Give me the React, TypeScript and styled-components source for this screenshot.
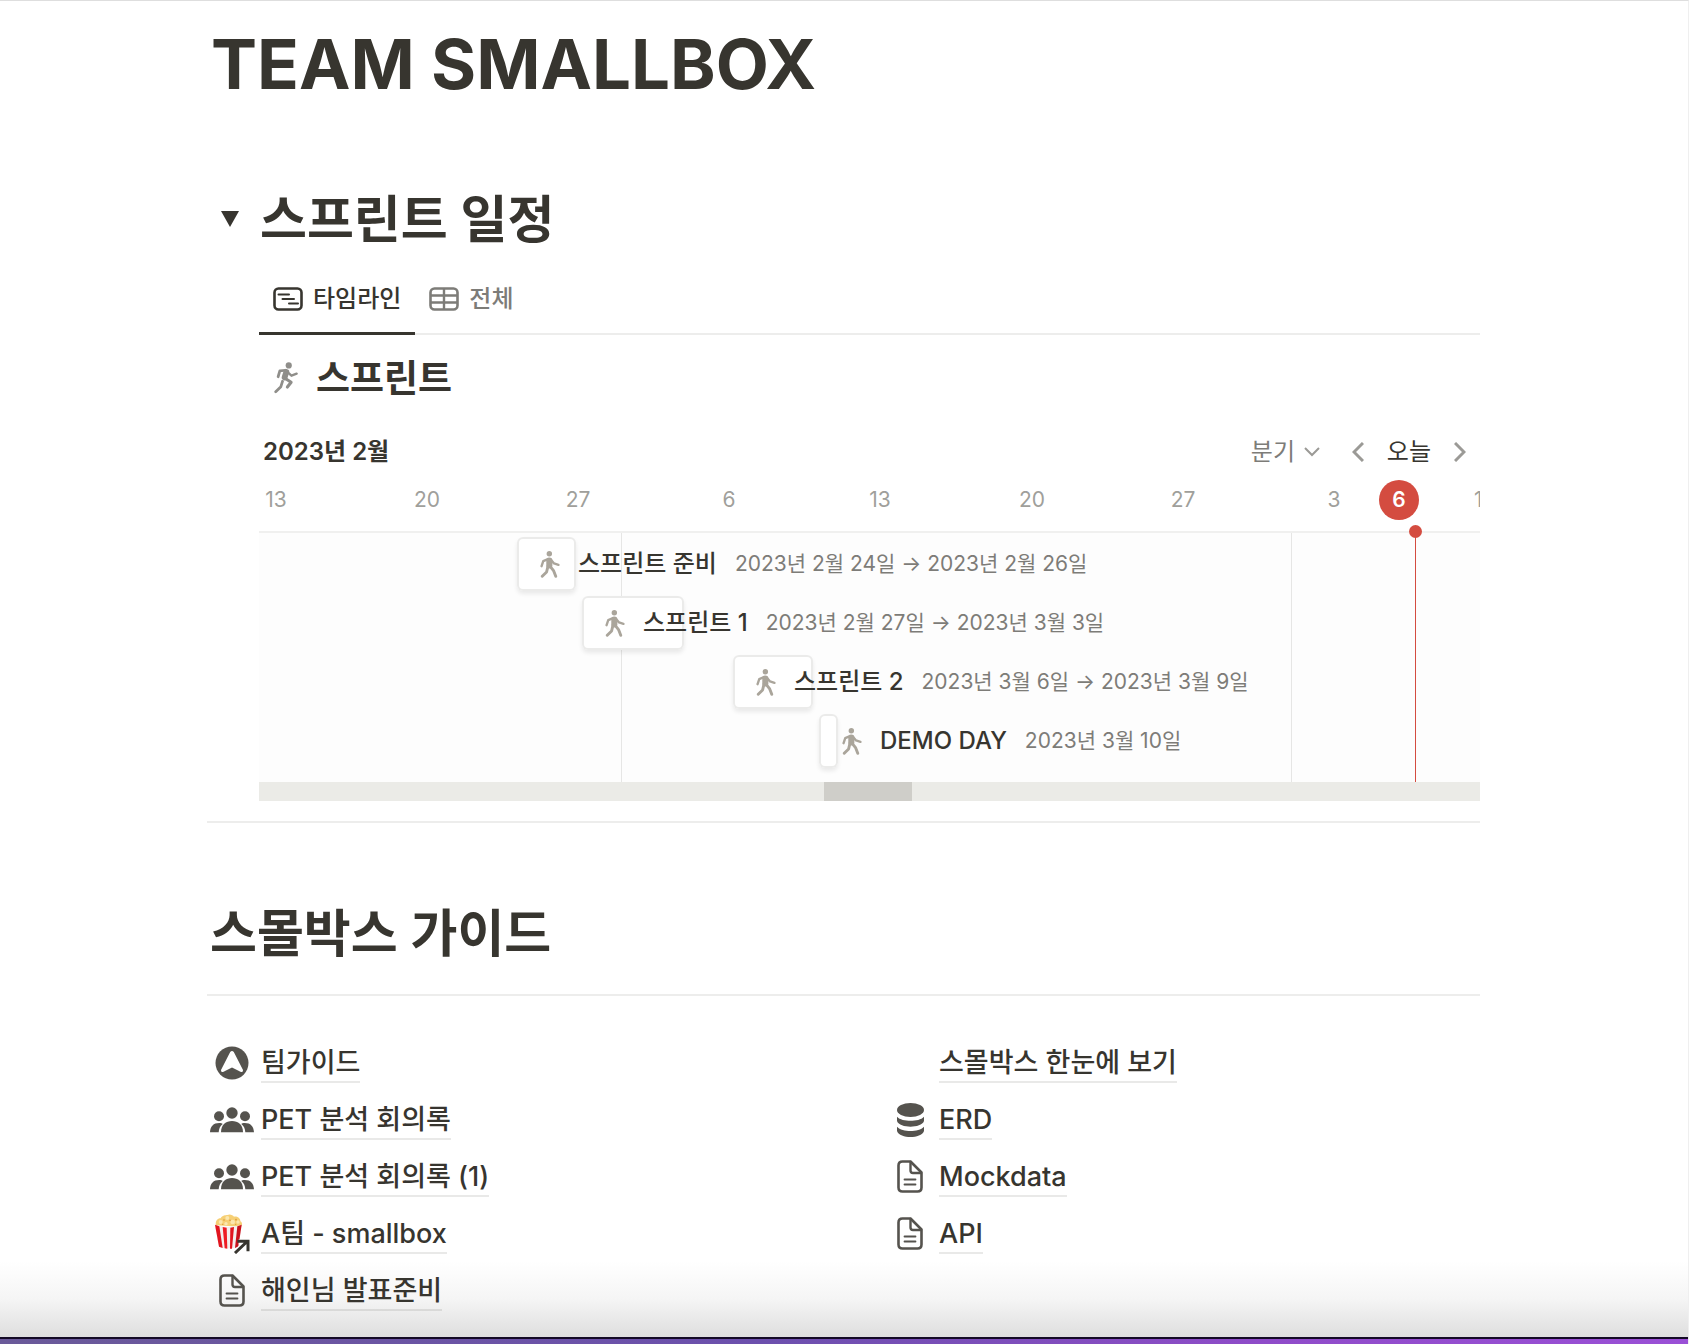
import React from "react";
import styled, { createGlobalStyle, css } from "styled-components";

const INK = "#37352f";
const GRAY = "#7d7c78";
const LINE = "#ededec";

const GlobalStyle = createGlobalStyle`
  *, *::before, *::after { box-sizing: border-box; }
  body {
    margin: 0;
    background: #fff;
    color: ${INK};
    font-family: Inter, "Noto Sans CJK KR", sans-serif;
    -webkit-font-smoothing: antialiased;
  }
  h1, h2, h3, p, ul { margin: 0; padding: 0; }
  button, select { font: inherit; color: inherit; background: none; border: 0; padding: 0; margin: 0; }
`;

const Page = styled.div`
  min-height: 100vh;
  display: flex;
  flex-direction: column;
  border-top: 1px solid #dedede;
  border-right: 1px solid #efefef;
`;

const Main = styled.main`
  flex: 1;
  padding: 14px 208px 12px 207px;
  background: linear-gradient(to bottom, #fff, #f5f5f5 50%, #dedede) no-repeat bottom / 100% 76px;
`;

const DesktopEdge = styled.footer`
  height: 7px;
  border-top: 2px solid #140a26;
  background: linear-gradient(to right, #6a5a99, #6c50ad 45%, #8f4cc9 75%, #9a50d6);
`;

const Title = styled.h1`
  padding-left: 4px;
  font-size: 69px;
  line-height: 98px;
  font-weight: 700;
`;

const Heading = styled.h2`
  font-size: 51px;
  line-height: 66px;
  font-weight: 600;
`;

const ToggleRow = styled.div`
  display: flex;
  align-items: center;
  gap: 21px;
  padding-left: 14px;
  margin-top: 74px;
`;

const ToggleButton = styled.button`
  display: flex;
  width: 18px;
  padding-bottom: 3px;
  cursor: pointer;
`;

const ToggleBody = styled.div`
  padding-left: 52px;
`;

const Tabs = styled.div`
  display: flex;
  margin-top: 12px;
  box-shadow: inset 0 -2px 0 ${LINE};
`;

const Tab = styled.button<{ $active?: boolean }>`
  display: flex;
  align-items: center;
  gap: 10px;
  height: 70px;
  padding: 0 14px;
  font-size: 24px;
  line-height: 30px;
  font-weight: 500;
  color: ${(p) => (p.$active ? INK : GRAY)};
  border-bottom: 3px solid ${(p) => (p.$active ? INK : "transparent")};
  cursor: pointer;
`;

const DatabaseTitle = styled.h3`
  display: flex;
  align-items: center;
  gap: 18px;
  padding-left: 15px;
  margin-top: 18px;
  font-size: 37px;
  line-height: 52px;
  font-weight: 700;
`;

const Toolbar = styled.div`
  display: flex;
  align-items: center;
  height: 40px;
  margin-top: 27px;
  padding: 0 14px 0 4px;
  line-height: 30px;
`;

const Month = styled.p`
  flex: 1;
  font-size: 24px;
  font-weight: 600;
`;

const ScaleField = styled.div`
  display: flex;
  align-items: center;
  gap: 8px;
  margin-right: 32px;
  color: #9b9a96;
`;

const ScaleSelect = styled.select`
  appearance: none;
  font-size: 24px;
  color: ${GRAY};
`;

const Pager = styled.div`
  display: flex;
  align-items: center;
  gap: 23px;
  color: #9b9a96;
`;

const PagerButton = styled.button`
  display: flex;
  cursor: pointer;
`;

const TodayButton = styled.button`
  font-size: 24px;
  color: ${INK};
  cursor: pointer;
`;

const Timeline = styled.div`
  position: relative;
  overflow: hidden;
`;

const Scale = styled.div`
  position: relative;
  height: 59px;
`;

const Tick = styled.span<{ $today?: boolean }>`
  position: absolute;
  top: 8px;
  width: 40px;
  margin-left: -20px;
  text-align: center;
  font-size: 21px;
  line-height: 40px;
  color: #a09f9b;
  ${(p) =>
    p.$today &&
    css`
      border-radius: 50%;
      background: #d44c40;
      color: #fff;
      font-weight: 600;
    `}
`;

const Canvas = styled.div`
  position: relative;
  height: 251px;
  padding-top: 4px;
  border-top: 2px solid #f0f0ef;
  background: #fdfdfd;
`;

const MonthLine = styled.div`
  position: absolute;
  top: 0;
  bottom: 0;
  width: 1px;
  background: #e6e6e5;
`;

const TodayLine = styled.div`
  position: absolute;
  top: 0;
  bottom: 0;
  width: 1px;
  background: #d44c40;
  &::before {
    content: "";
    position: absolute;
    top: -8px;
    left: -6px;
    width: 13px;
    height: 13px;
    border-radius: 50%;
    background: #d44c40;
  }
`;

const Row = styled.div`
  position: relative;
  display: flex;
  height: 54px;
  margin-bottom: 5px;
`;

const Card = styled.div`
  flex: none;
  min-width: 19px;
  border-radius: 6px;
  background: #fff;
  box-shadow: 0 0 0 2px #ebebea inset, 0 3px 4px rgba(15, 15, 15, 0.08);
`;

const CardContent = styled.a`
  position: absolute;
  display: flex;
  align-items: center;
  height: 54px;
  padding-left: 23px;
  line-height: 30px;
  white-space: nowrap;
  color: inherit;
  text-decoration: none;
`;

const CardName = styled.span`
  margin: 0 18px;
  font-size: 24px;
  font-weight: 500;
`;

const CardDate = styled.span`
  font-size: 21px;
  color: ${GRAY};
`;

const ScrollTrack = styled.div`
  height: 19px;
  background: #ebebe7;
`;

const ScrollThumb = styled.div`
  width: 88px;
  height: 19px;
  background: #cfcec9;
`;

const Divider = styled.hr`
  height: 2px;
  margin: 0;
  border: 0;
  background: ${LINE};
`;

const Guide = styled.section`
  margin-top: 20px;
`;

const GuideHeading = styled(Heading)`
  padding-left: 3px;
  margin: 78px 0 27px;
`;

const Columns = styled.div`
  display: grid;
  grid-template-columns: 1fr 1fr;
  column-gap: 83px;
  margin-top: 38px;
`;

const LinkList = styled.ul`
  list-style: none;
`;

const LinkRow = styled.li`
  display: flex;
  height: 57px;
  align-items: center;
`;

const PageLink = styled.a`
  display: flex;
  align-items: center;
  gap: 4px;
  color: inherit;
  text-decoration: none;
`;

const IconSlot = styled.span`
  display: flex;
  width: 50px;
  justify-content: center;
  align-items: center;
  color: #55534e;
`;

const LinkText = styled.span`
  padding-top: 2px;
  font-size: 27px;
  line-height: 36px;
  font-weight: 500;
  border-bottom: 2px solid rgba(55, 53, 47, 0.11);
`;

const TimelineIcon = () => (
  <svg width="30" height="24" viewBox="0 0 30 24" fill="none" stroke="currentColor" strokeLinecap="round">
    <rect x="1.5" y="1.5" width="27" height="21" rx="4" strokeWidth="2.6" />
    <path d="M5.5 7.5H16M9.5 12H21M16 16.5H25" strokeWidth="2" />
  </svg>
);

const TableIcon = () => (
  <svg width="30" height="24" viewBox="0 0 30 24" fill="none" stroke="currentColor">
    <rect x="1.5" y="1.5" width="27" height="21" rx="4" strokeWidth="2.6" />
    <path d="M2 8.5H28M2 15.5H28M15 2V22" strokeWidth="2.4" />
  </svg>
);

const RunIcon = () => (
  <svg width="24" height="35" viewBox="0 0 70 102" fill="none" stroke="#8f8e8a" strokeLinecap="round" strokeLinejoin="round">
    <circle cx="43" cy="10" r="9" fill="#8f8e8a" stroke="none" />
    <path d="M34 24L17 26L12 43" strokeWidth="8" />
    <path d="M36 29L31 45" strokeWidth="17" />
    <path d="M41 31L51 40L66 34" strokeWidth="7" />
    <path d="M33 48L50 59L39 73" strokeWidth="9" />
    <path d="M25 56L20 72L5 87" strokeWidth="8" />
  </svg>
);

const WalkIcon = () => (
  <svg width="20" height="27" viewBox="0 0 58 80" fill="none" stroke="#aaa59b" strokeLinecap="round" strokeLinejoin="round">
    <circle cx="27" cy="8" r="8" fill="#aaa59b" stroke="none" />
    <path d="M23 24L9 30L4 45" strokeWidth="7" />
    <path d="M27 28V43" strokeWidth="18" />
    <path d="M31 25L41 37L54 41" strokeWidth="7" />
    <path d="M23 45L19 62L6 75" strokeWidth="8.5" />
    <path d="M30 46L40 59L46 75" strokeWidth="8.5" />
  </svg>
);

const Chevron = ({ d, w, h, stroke = 3 }: { d: string; w: number; h: number; stroke?: number }) => (
  <svg width={w} height={h} viewBox={`0 0 ${w} ${h}`} fill="none" stroke="currentColor" strokeWidth={stroke}>
    <path d={d} />
  </svg>
);

const CompassIcon = () => (
  <svg width="34" height="34" viewBox="0 0 34 34">
    <circle cx="17" cy="17" r="16.5" fill="currentColor" />
    <path d="M15.2 6Q17 3.8 18.8 6L28 24Q28.300 26.600 26 26L17 21.500L8 26Q5.700 26.600 6 24Z" fill="#fff" />
  </svg>
);

const PeopleIcon = () => (
  <svg width="44" height="26" viewBox="0 0 132 78" fill="currentColor">
    <circle cx="66" cy="18" r="17" />
    <circle cx="27" cy="28" r="15" />
    <circle cx="105" cy="28" r="15" />
    <path d="M33 76C33 52 48 42 66 42S99 52 99 76Z" />
    <path d="M0 76C1 58 10 48 28 48C33 48 36 49 38 51C30 57 27 65 26 76Z" />
    <path d="M132 76C131 58 122 48 104 48C99 48 96 49 94 51C102 57 105 65 106 76Z" />
  </svg>
);

const DocIcon = () => (
  <svg width="26" height="33" viewBox="0 0 26 33" fill="none" stroke="currentColor" strokeLinejoin="round" strokeLinecap="round">
    <path d="M5.500 1.500H13.500L24.500 12.500V27.500Q24.500 31.500 20.500 31.500H5.500Q1.500 31.500 1.500 27.500V5.500Q1.500 1.500 5.500 1.500Z" strokeWidth="2.6" />
    <path d="M13.500 2V10.500Q13.500 13 16 13H24" strokeWidth="2.400" />
    <path d="M7.500 19.500H18.500M7.500 24.500H18.500" strokeWidth="1.800" />
  </svg>
);

const DatabaseIcon = () => (
  <svg width="27" height="34" viewBox="0 0 81 102" fill="currentColor">
    <ellipse cx="40.500" cy="21" rx="40.500" ry="21" />
    <path d="M0 41C8 50 25 53 40.500 53S73 50 81 41V54C77 66 58 71 40.500 71S4 66 0 54Z" />
    <path d="M0 71C8 80 25 84 40.500 84S73 80 81 71V84C77 97 58 102 40.500 102S4 97 0 84Z" />
  </svg>
);

const PopcornIcon = () => (
  <svg width="36" height="40" viewBox="0 0 108 120">
    <path d="M6 34C2 20 14 12 20 13C24 3 36 4 40 3C48-1 56 3 60 8C70 6 80 14 79 22C86 26 85 34 82 38Z" fill="#f6cf74" />
    <g fill="#fbe7ae">
      <circle cx="20" cy="24" r="6" /><circle cx="40" cy="12" r="6" /><circle cx="56" cy="24" r="7" /><circle cx="36" cy="29" r="5" /><circle cx="72" cy="24" r="5" />
    </g>
    <g fill="#d99a3c">
      <circle cx="30" cy="18" r="2.500" /><circle cx="48" cy="19" r="2.500" /><circle cx="66" cy="17" r="2.500" /><circle cx="26" cy="31" r="2" /><circle cx="65" cy="31" r="2" />
    </g>
    <path d="M3 32Q43 46 83 32L73 98Q43 108 15 98Z" fill="#f3efee" />
    <path d="M3 32L16 37L26 102L15 98Z" fill="#e2151f" />
    <path d="M26 39L38 41L40 104L32 103Z" fill="#ee1c24" />
    <path d="M49 41L60 39L54 104L48 104Z" fill="#e2151f" />
    <path d="M70 37L83 32L73 98L63 102Z" fill="#c9121d" />
    <path d="M64 116L101 82M74 84H102V108" fill="none" stroke="#fff" strokeWidth="17" />
    <path d="M63 117L101 81M70 82H102V112" fill="none" stroke={INK} strokeWidth="9" />
  </svg>
);

const WEEK = 151;
const ORIGIN = 17;
const dayX = (day: number) => ORIGIN + Math.round((day * WEEK) / 7) + (day > 30 ? 1 : 0);

const ticks = [
  { day: 0, label: "13" },
  { day: 7, label: "20" },
  { day: 14, label: "27" },
  { day: 21, label: "6" },
  { day: 28, label: "13" },
  { day: 35, label: "20" },
  { day: 42, label: "27" },
  { day: 49, label: "3" },
  { day: 52, label: "6", today: true },
  { day: 56, label: "10" },
];

const sprints = [
  { name: "스프린트 준비", date: "2023년 2월 24일 → 2023년 2월 26일", start: 11, days: 3 },
  { name: "스프린트 1", date: "2023년 2월 27일 → 2023년 3월 3일", start: 14, days: 5 },
  { name: "스프린트 2", date: "2023년 3월 6일 → 2023년 3월 9일", start: 21, days: 4 },
  { name: "DEMO DAY", date: "2023년 3월 10일", start: 25, days: 1 },
];

type GuideLink = { text: string; icon?: React.ReactNode };

const leftLinks: GuideLink[] = [
  { text: "팀가이드", icon: <CompassIcon /> },
  { text: "PET 분석 회의록", icon: <PeopleIcon /> },
  { text: "PET 분석 회의록 (1)", icon: <PeopleIcon /> },
  { text: "A팀 - smallbox", icon: <PopcornIcon /> },
  { text: "해인님 발표준비", icon: <DocIcon /> },
];

const rightLinks: GuideLink[] = [
  { text: "스몰박스 한눈에 보기" },
  { text: "ERD", icon: <DatabaseIcon /> },
  { text: "Mockdata", icon: <DocIcon /> },
  { text: "API", icon: <DocIcon /> },
];

const Links = ({ items }: { items: GuideLink[] }) => (
  <LinkList>
    {items.map((item) => (
      <LinkRow key={item.text}>
        <PageLink href="#">
          <IconSlot>{item.icon}</IconSlot>
          <LinkText>{item.text}</LinkText>
        </PageLink>
      </LinkRow>
    ))}
  </LinkList>
);

export default function App() {
  return (
    <>
      <GlobalStyle />
      <Page>
        <Main>
          <Title>TEAM SMALLBOX</Title>

          <ToggleRow>
            <ToggleButton aria-label="접기" aria-expanded="true">
              <svg width="18" height="16" viewBox="0 0 18 16" fill={INK}>
                <path d="M0 0H18L9 16Z" />
              </svg>
            </ToggleButton>
            <Heading>스프린트 일정</Heading>
          </ToggleRow>

          <ToggleBody>
            <Tabs>
              <Tab $active>
                <TimelineIcon />
                타임라인
              </Tab>
              <Tab>
                <TableIcon />
                전체
              </Tab>
            </Tabs>

            <DatabaseTitle>
              <RunIcon />
              스프린트
            </DatabaseTitle>

            <Toolbar>
              <Month>2023년 2월</Month>
              <ScaleField>
                <ScaleSelect aria-label="기간 단위" defaultValue="분기">
                  <option>분기</option>
                </ScaleSelect>
                <Chevron d="M1 1L8 8L15 1" w={16} h={10} stroke={2} />
              </ScaleField>
              <Pager>
                <PagerButton aria-label="이전">
                  <Chevron d="M11 1L2 10L11 19" w={12} h={20} />
                </PagerButton>
                <TodayButton>오늘</TodayButton>
                <PagerButton aria-label="다음">
                  <Chevron d="M1 1L10 10L1 19" w={12} h={20} />
                </PagerButton>
              </Pager>
            </Toolbar>

            <Timeline>
              <Scale>
                {ticks.map((t) => (
                  <Tick key={t.day} $today={t.today} style={{ left: dayX(t.day) }}>
                    {t.label}
                  </Tick>
                ))}
              </Scale>
              <Canvas>
                <MonthLine style={{ left: dayX(16) }} />
                <MonthLine style={{ left: dayX(47) }} />
                <TodayLine style={{ left: dayX(52) + 16 }} />
                {sprints.map((s) => (
                  <Row key={s.name} style={{ marginLeft: dayX(s.start) + 4 }}>
                    <Card style={{ width: Math.round((s.days * WEEK) / 7) - 6 }} />
                    <CardContent href="#">
                      <WalkIcon />
                      <CardName>{s.name}</CardName>
                      <CardDate>{s.date}</CardDate>
                    </CardContent>
                  </Row>
                ))}
              </Canvas>
              <ScrollTrack>
                <ScrollThumb style={{ marginLeft: dayX(25) + 9 }} />
              </ScrollTrack>
            </Timeline>
          </ToggleBody>

          <Guide>
            <Divider />
            <GuideHeading>스몰박스 가이드</GuideHeading>
            <Divider />
            <Columns>
              <Links items={leftLinks} />
              <Links items={rightLinks} />
            </Columns>
          </Guide>
        </Main>
        <DesktopEdge />
      </Page>
    </>
  );
}
